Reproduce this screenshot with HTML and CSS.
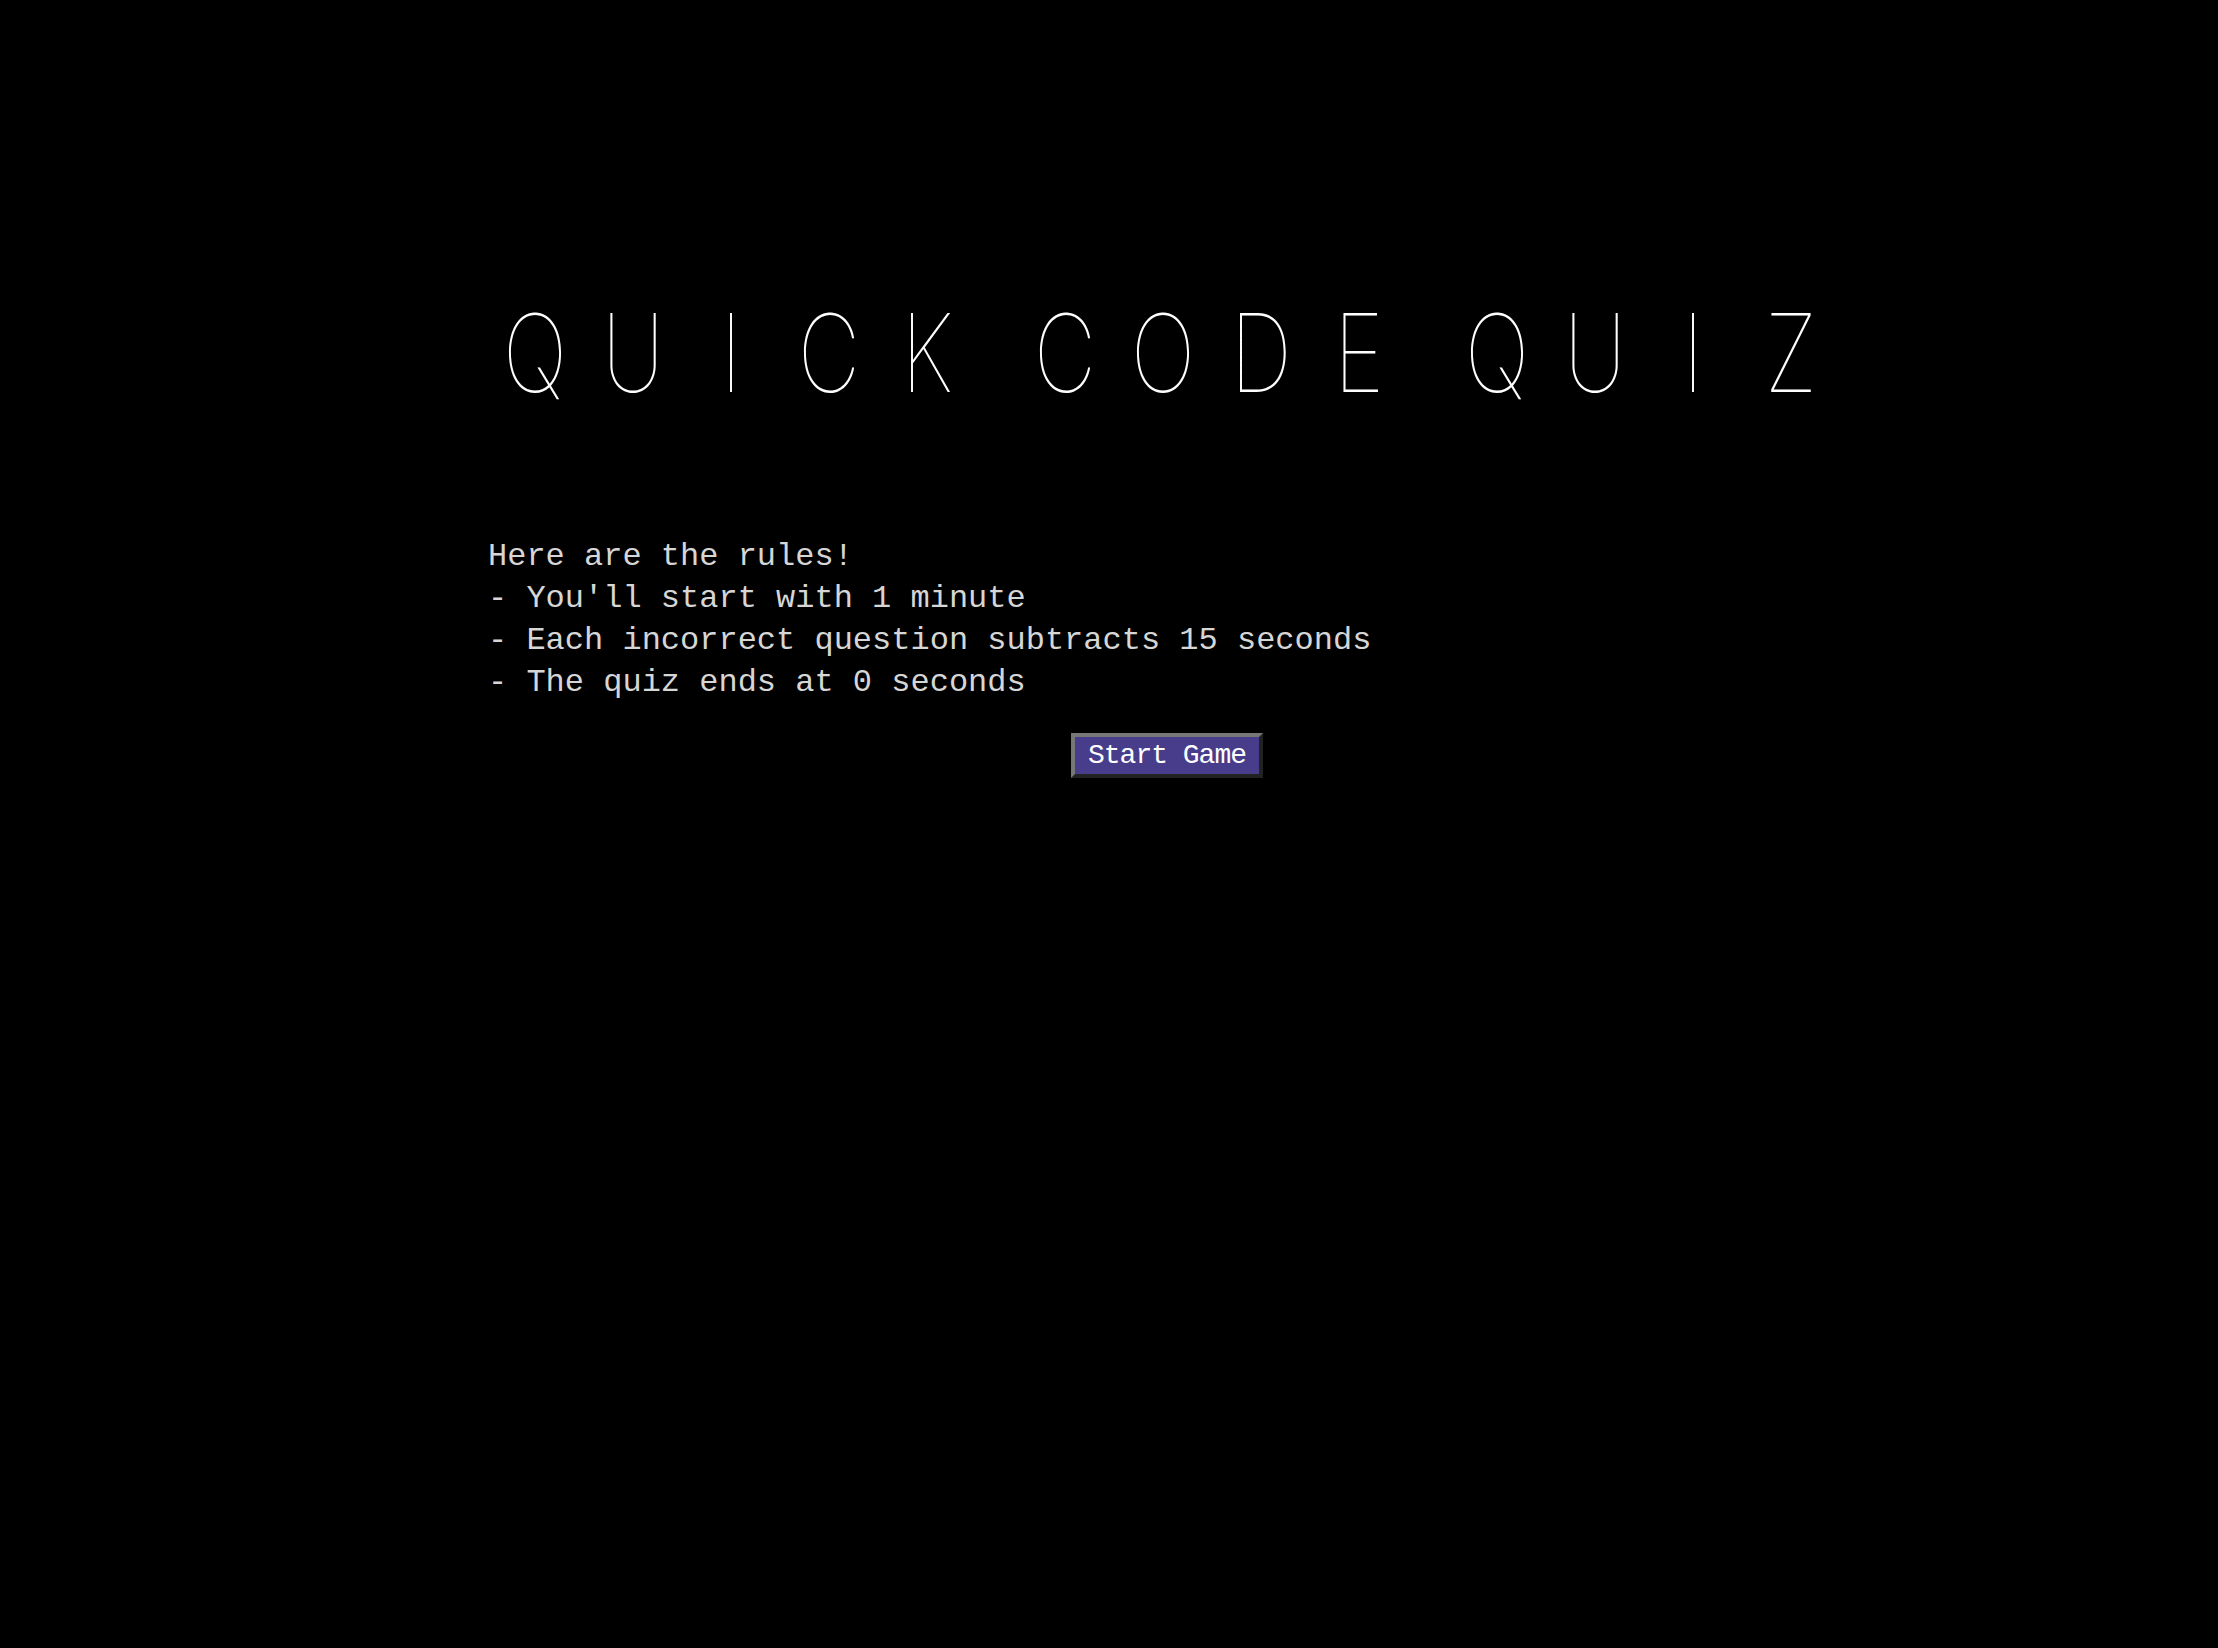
FILE: index.html
```html
<!DOCTYPE html>
<html lang="en">
<head>
<meta charset="utf-8">
<title>Quick Code Quiz</title>
<link rel="stylesheet" href="styles.css">
</head>
<body>
<main class="quiz">
  <h1 class="title" aria-label="QUICK CODE QUIZ">
    <span class="word"><span class="ch">Q</span><span class="ch">U</span><span class="ch">I</span><span class="ch">C</span><span class="ch">K</span></span>
    <span class="word"><span class="ch">C</span><span class="ch">O</span><span class="ch">D</span><span class="ch">E</span></span>
    <span class="word"><span class="ch">Q</span><span class="ch">U</span><span class="ch">I</span><span class="ch">Z</span></span>
  </h1>
  <section class="intro">
    <p class="rules">Here are the rules!<br>- You'll start with 1 minute<br>- Each incorrect question subtracts 15 seconds<br>- The quiz ends at 0 seconds</p>
    <div class="actions">
      <button class="start-btn" type="button">Start Game</button>
    </div>
  </section>
</main>
</body>
</html>
```
FILE: styles.css
```css
html, body {
  margin: 0;
  padding: 0;
  background: #000;
  height: 100%;
}
body {
  color: #fff;
  font-family: "Liberation Mono", "DejaVu Sans Mono", monospace;
}
.quiz {
  width: 1358px;
  margin-left: 488px;
  padding-top: 288px;
  display: flex;
  flex-direction: column;
}
.title {
  margin: 0;
  display: flex;
  justify-content: center;
  gap: 40px;
  font-family: Inter, Roboto, sans-serif;
  font-weight: 100;
  font-size: 108px;
  line-height: 130px;
  color: #fff;
  padding-right: 8px;
}
.word {
  display: flex;
}
.ch {
  display: block;
  width: 98px;
  text-align: center;
  transform: scaleX(0.8);
}
.intro {
  margin-top: 118px;
  display: flex;
  flex-direction: column;
}
.rules {
  margin: 0;
  font-size: 32px;
  line-height: 42px;
  color: #d6d6d6;
}
.actions {
  display: flex;
  justify-content: center;
  margin-top: 29px;
}
.start-btn {
  background: #483d8b;
  color: #fff;
  font-family: "Liberation Mono", "DejaVu Sans Mono", monospace;
  font-size: 28px;
  letter-spacing: -1px;
  height: 45px;
  width: 192px;
  padding: 0;
  border: 4px solid;
  border-color: #777 #222 #222 #777;
  cursor: pointer;
}
```
